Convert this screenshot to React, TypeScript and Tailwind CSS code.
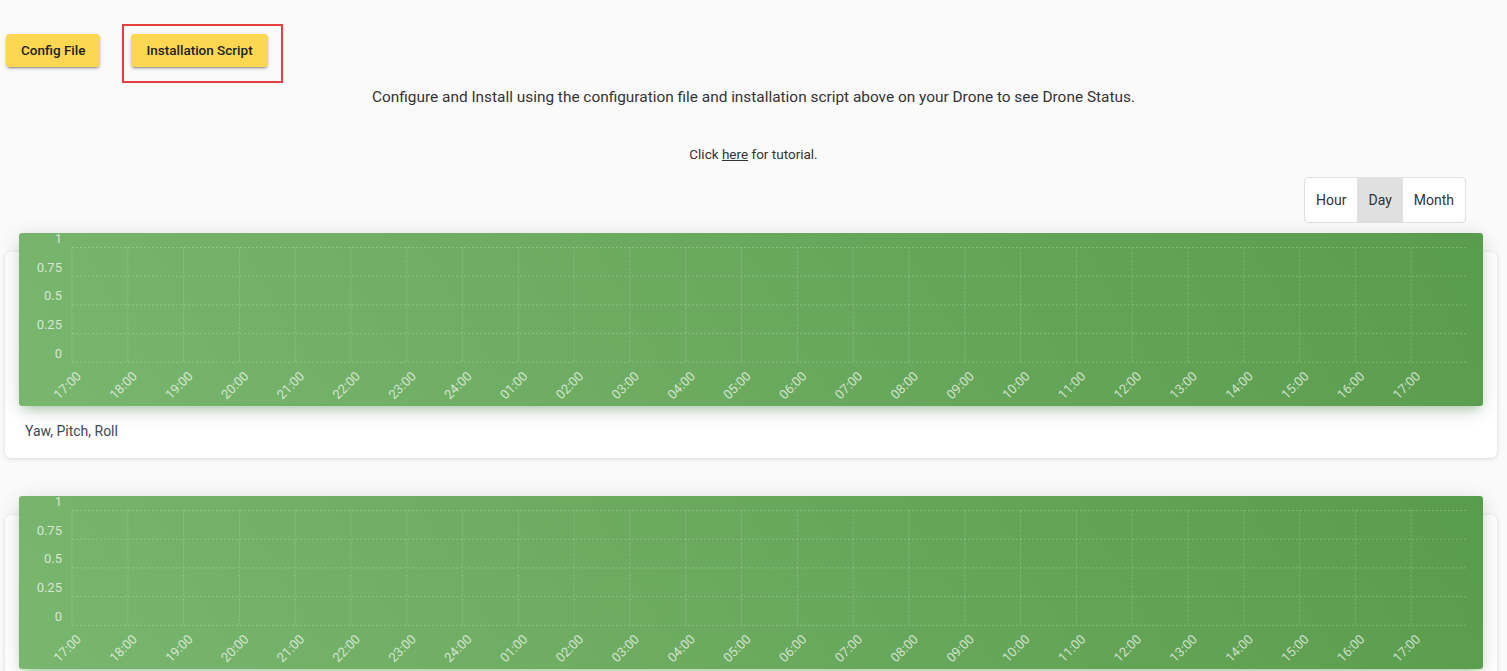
import React from "react";

const hours = [
  "17:00", "18:00", "19:00", "20:00", "21:00", "22:00", "23:00", "24:00",
  "01:00", "02:00", "03:00", "04:00", "05:00", "06:00", "07:00", "08:00",
  "09:00", "10:00", "11:00", "12:00", "13:00", "14:00", "15:00", "16:00", "17:00",
];

const yTicks = ["1", "0.75", "0.5", "0.25", "0"];

const GRID_LEFT = 53;
const GRID_RIGHT = 1448;
const GRID_TOP = 14.5;
const ROW = 28.7;
const COL = (GRID_RIGHT - GRID_LEFT) / hours.length;

const Chart = () => {
  return (
    <svg width="1463" height="173" className="block">
      <g stroke="rgba(255,255,255,0.22)" strokeWidth="1" strokeDasharray="2 2">
        {yTicks.map((_, i) => (
          <line
            key={"h" + i}
            x1={GRID_LEFT}
            x2={GRID_RIGHT}
            y1={GRID_TOP + i * ROW}
            y2={GRID_TOP + i * ROW}
          />
        ))}
        {hours.map((_, i) => (
          <line
            key={"v" + i}
            x1={GRID_LEFT + i * COL}
            x2={GRID_LEFT + i * COL}
            y1={GRID_TOP}
            y2={GRID_TOP + 4 * ROW}
          />
        ))}
      </g>
      <g
        fill="rgba(255,255,255,0.7)"
        fontSize="13"
        fontFamily="Roboto, 'Liberation Sans', sans-serif"
      >
        {yTicks.map((t, i) => (
          <text key={"y" + t} x={43} y={GRID_TOP + i * ROW - 4.5} textAnchor="end">
            {t}
          </text>
        ))}
        {hours.map((h, i) => {
          const x = GRID_LEFT + i * COL + 10;
          const y = 144;
          return (
            <text
              key={"x" + i}
              x={x}
              y={y}
              textAnchor="end"
              transform={`rotate(-45 ${x} ${y})`}
            >
              {h}
            </text>
          );
        })}
      </g>
    </svg>
  );
};

const ChartCard = ({ title, className }: { title: string; className?: string }) => {
  return (
    <div
      className={`flex flex-col ml-[5px] mr-[10px] bg-white rounded-md shadow-[0_1px_4px_0_rgba(0,0,0,0.14)] ${className ?? ""}`}
    >
      <div className="mx-[14px] -mt-[19px] h-[173px] rounded-[3px] overflow-hidden bg-[linear-gradient(60deg,#79b66e,#5a9c4d)] shadow-[0_4px_20px_0_rgba(0,0,0,0.14),0_7px_10px_-5px_rgba(76,175,80,0.4)]">
        <Chart />
      </div>
      <div className="px-[20px] pt-[15px] pb-[17px]">
        <p className="text-[14px] leading-[20px] text-[#3c4858]">{title}</p>
      </div>
    </div>
  );
};

const btn =
  "h-[33px] px-[15px] rounded-[4px] bg-[#fdd652] text-[13.5px] font-medium text-[#212121] shadow-[0_3px_1px_-2px_rgba(0,0,0,0.2),0_2px_2px_0_rgba(0,0,0,0.14),0_1px_5px_0_rgba(0,0,0,0.12)]";

const App = () => {
  return (
    <div
      className="min-h-screen bg-[#fafafa] pt-[34px] overflow-hidden"
      style={{ fontFamily: "Roboto, 'Liberation Sans', sans-serif" }}
    >
      <div className="flex flex-row items-start pl-[6px] gap-x-[31px]">
        <button className={btn}>Config File</button>
        <div className="relative">
          <button className={btn}>Installation Script</button>
          <div className="absolute -left-[9px] -top-[10px] -right-[15px] -bottom-[16px] border-2 border-[#e5403f] pointer-events-none" />
        </div>
      </div>
      <p className="mt-[18px] text-center text-[15.4px] leading-[24px] text-[#333333]">
        Configure and Install using the configuration file and installation script above on your Drone to see Drone Status.
      </p>
      <p className="mt-[35px] text-center text-[13.5px] leading-[20px] text-[#333333]">
        Click <a className="underline">here</a> for tutorial.
      </p>
      <div className="mt-[13px] flex justify-end pr-[41px]">
        <div className="flex flex-row h-[46px] border border-[#e0e0e0] rounded-[4px] overflow-hidden bg-white text-[14px] text-[#333333]">
          <button className="px-[11px]">Hour</button>
          <button className="px-[11px] bg-[#e0e0e0]">Day</button>
          <button className="px-[11px]">Month</button>
        </div>
      </div>
      <ChartCard title="Yaw, Pitch, Roll" className="mt-[29px]" />
      <ChartCard title="Altitude" className="mt-[57px]" />
    </div>
  );
};

export default App;
